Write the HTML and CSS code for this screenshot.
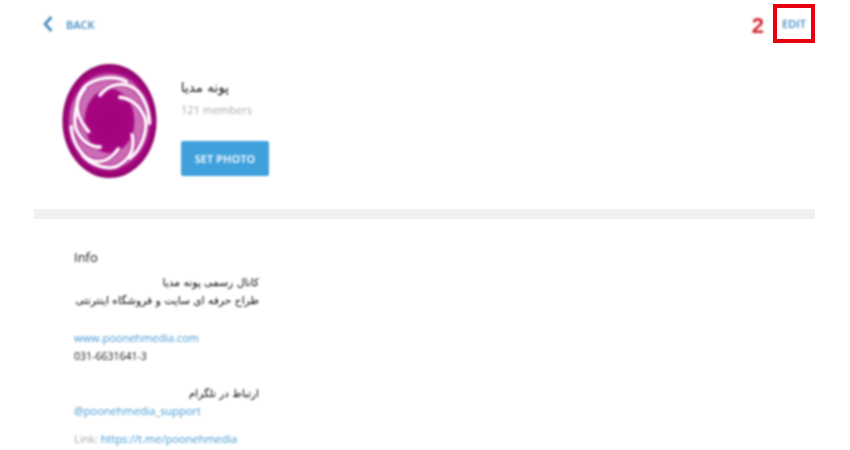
FILE: index.html
```html
<!DOCTYPE html>
<html lang="en">
<head>
<meta charset="utf-8">
<title>Channel info</title>
<link rel="stylesheet" href="styles.css">
</head>
<body>
<div class="app">
  <header class="topbar">
    <a class="back soft">
      <svg class="chev" width="10" height="18" viewBox="0 0 10 18"><path d="M8.5 2 L2 9 L8.5 16" fill="none" stroke="#3f86ba" stroke-width="2.6"/></svg>
      <span>BACK</span>
    </a>
    <div class="edit-wrap">
      <span class="num soft">2</span>
      <a class="edit"><span class="soft">EDIT</span></a>
    </div>
  </header>
  <section class="profile soft">
    <svg class="avatar" width="95" height="114" viewBox="22 12 283 343">
      <defs>
        <radialGradient id="bg" cx="50%" cy="50%" r="50%">
          <stop offset="0" stop-color="#a3007c"/>
          <stop offset="0.86" stop-color="#a80b84"/>
          <stop offset="1" stop-color="#8f0068"/>
        </radialGradient>
      </defs>
      <ellipse cx="163.5" cy="183.5" rx="141.5" ry="171.5" fill="url(#bg)"/>
      <ellipse cx="163.5" cy="183.5" rx="98" ry="120" fill="none" stroke="#cb6db6" stroke-width="46"/>
      <g fill="none" stroke-linecap="round">
        <g stroke="#a81788" stroke-width="17">
          <path d="M100 215 C70 180 50 130 85 85 C105 60 170 40 215 65"/>
          <path d="M135 105 C160 75 195 65 230 80 C260 95 282 140 284 190"/>
          <path d="M195 112 C225 115 255 135 270 175 C280 210 260 270 225 295"/>
          <path d="M232 225 C240 265 225 300 185 320 C160 330 110 320 82 285"/>
          <path d="M190 268 C170 295 140 315 105 300 C85 292 50 250 48 200"/>
          <path d="M135 262 C105 262 75 240 62 205 C55 180 60 120 90 85"/>
        </g>
        <g stroke="#f0c4e4" stroke-width="12">
          <path d="M100 215 C70 180 50 130 85 85 C105 60 170 40 215 65"/>
          <path d="M135 105 C160 75 195 65 230 80 C260 95 282 140 284 190"/>
          <path d="M195 112 C225 115 255 135 270 175 C280 210 260 270 225 295"/>
          <path d="M232 225 C240 265 225 300 185 320 C160 330 110 320 82 285"/>
          <path d="M190 268 C170 295 140 315 105 300 C85 292 50 250 48 200"/>
          <path d="M135 262 C105 262 75 240 62 205 C55 180 60 120 90 85"/>
        </g>
        <g stroke="#ffffff" stroke-width="7">
          <path d="M100 215 C70 180 50 130 85 85 C105 60 170 40 215 65"/>
          <path d="M135 105 C160 75 195 65 230 80 C260 95 282 140 284 190"/>
          <path d="M195 112 C225 115 255 135 270 175 C280 210 260 270 225 295"/>
          <path d="M232 225 C240 265 225 300 185 320 C160 330 110 320 82 285"/>
          <path d="M190 268 C170 295 140 315 105 300 C85 292 50 250 48 200"/>
          <path d="M135 262 C105 262 75 240 62 205 C55 180 60 120 90 85"/>
        </g>
      </g>
    </svg>
    <div class="details">
      <div class="name" dir="rtl">پونه مدیا</div>
      <div class="members">121 members</div>
      <button class="set-photo">SET PHOTO</button>
    </div>
  </section>
  <div class="divider"></div>
  <section class="info soft">
    <h2 class="info-title">Info</h2>
    <p class="para rtl" dir="rtl">کانال رسمی پونه مدیا<br>طراح حرفه ای سایت و فروشگاه اینترنتی</p>
    <p class="para"><a class="link">www.poonehmedia.com</a><br><span class="phone">031-6631641-3</span></p>
    <p class="para"><span class="rtl-line" dir="rtl">ارتباط در تلگرام</span><a class="link">@poonehmedia_support</a></p>
    <p class="para last"><span class="muted">Link:</span> <a class="link">https://t.me/poonehmedia</a></p>
  </section>
</div>
</body>
</html>
```
FILE: styles.css
```css
* { box-sizing: border-box; }
html, body { margin: 0; height: 100%; }
body {
  width: 850px;
  height: 450px;
  overflow: hidden;
  background: #fff;
  font-family: "Open Sans", "DejaVu Sans", sans-serif;
  color: #333;
}
.app {
  width: 781px;
  margin-left: 34px;
}
.soft { filter: blur(0.8px); }
.topbar {
  height: 46px;
  padding-top: 4px;
  display: flex;
  justify-content: space-between;
  align-items: flex-start;
}
.back {
  display: flex;
  align-items: center;
  gap: 13px;
  height: 40px;
  padding-left: 9px;
  color: #3f8ac0;
  font-size: 11px;
  font-weight: 600;
}
.edit-wrap {
  display: flex;
  align-items: center;
  gap: 9px;
}
.num {
  padding-top: 5px;
  color: #d5252f;
  font-family: "Liberation Sans", sans-serif;
  font-weight: 700;
  font-size: 22px;
}
.edit {
  width: 42px;
  height: 39px;
  border: 4px solid #e8000f;
  display: flex;
  align-items: center;
  justify-content: center;
  color: #3f8ac0;
  font-size: 11px;
  font-weight: 600;
}
.profile {
  display: flex;
  gap: 24px;
  padding: 18px 0 0 28px;
  height: 163px;
}
.details {
  display: flex;
  flex-direction: column;
  align-items: flex-start;
}
.name {
  width: 48px;
  margin-top: 13px;
  height: 20px;
  font-family: "DejaVu Sans", sans-serif;
  font-size: 13.5px;
  line-height: 20px;
  color: #111;
  white-space: nowrap;
}
.members {
  margin-top: 5px;
  font-size: 11px;
  line-height: 16px;
  color: #a8a8a8;
}
.set-photo {
  margin-top: 23px;
  width: 88px;
  height: 35px;
  padding: 0;
  border: 0;
  border-radius: 2px;
  background: #3fa0dc;
  color: #e6f3fb;
  font-family: inherit;
  font-size: 11px;
  font-weight: 700;
}
.divider {
  height: 10px;
  background: #f0f0f0;
}
.info {
  padding: 28px 0 0 40px;
  width: 225px;
  font-size: 11px;
  line-height: 18px;
}
.info-title {
  margin: 0 0 7px;
  font-size: 13px;
  font-weight: 400;
  line-height: 20px;
  color: #111;
}
.para {
  margin: 0 0 19px;
  white-space: nowrap;
}
.para.last { margin-top: -9px; }
.phone { font-size: 10.5px; color: #111; }
.rtl, .rtl-line {
  font-family: "DejaVu Sans", sans-serif;
  color: #000;
  text-align: right;
}
.rtl { font-size: 10.7px; }
.rtl-line { display: block; font-size: 10.4px; }
.link { color: #4097d2; }
.muted { color: #a8a8a8; }
```
